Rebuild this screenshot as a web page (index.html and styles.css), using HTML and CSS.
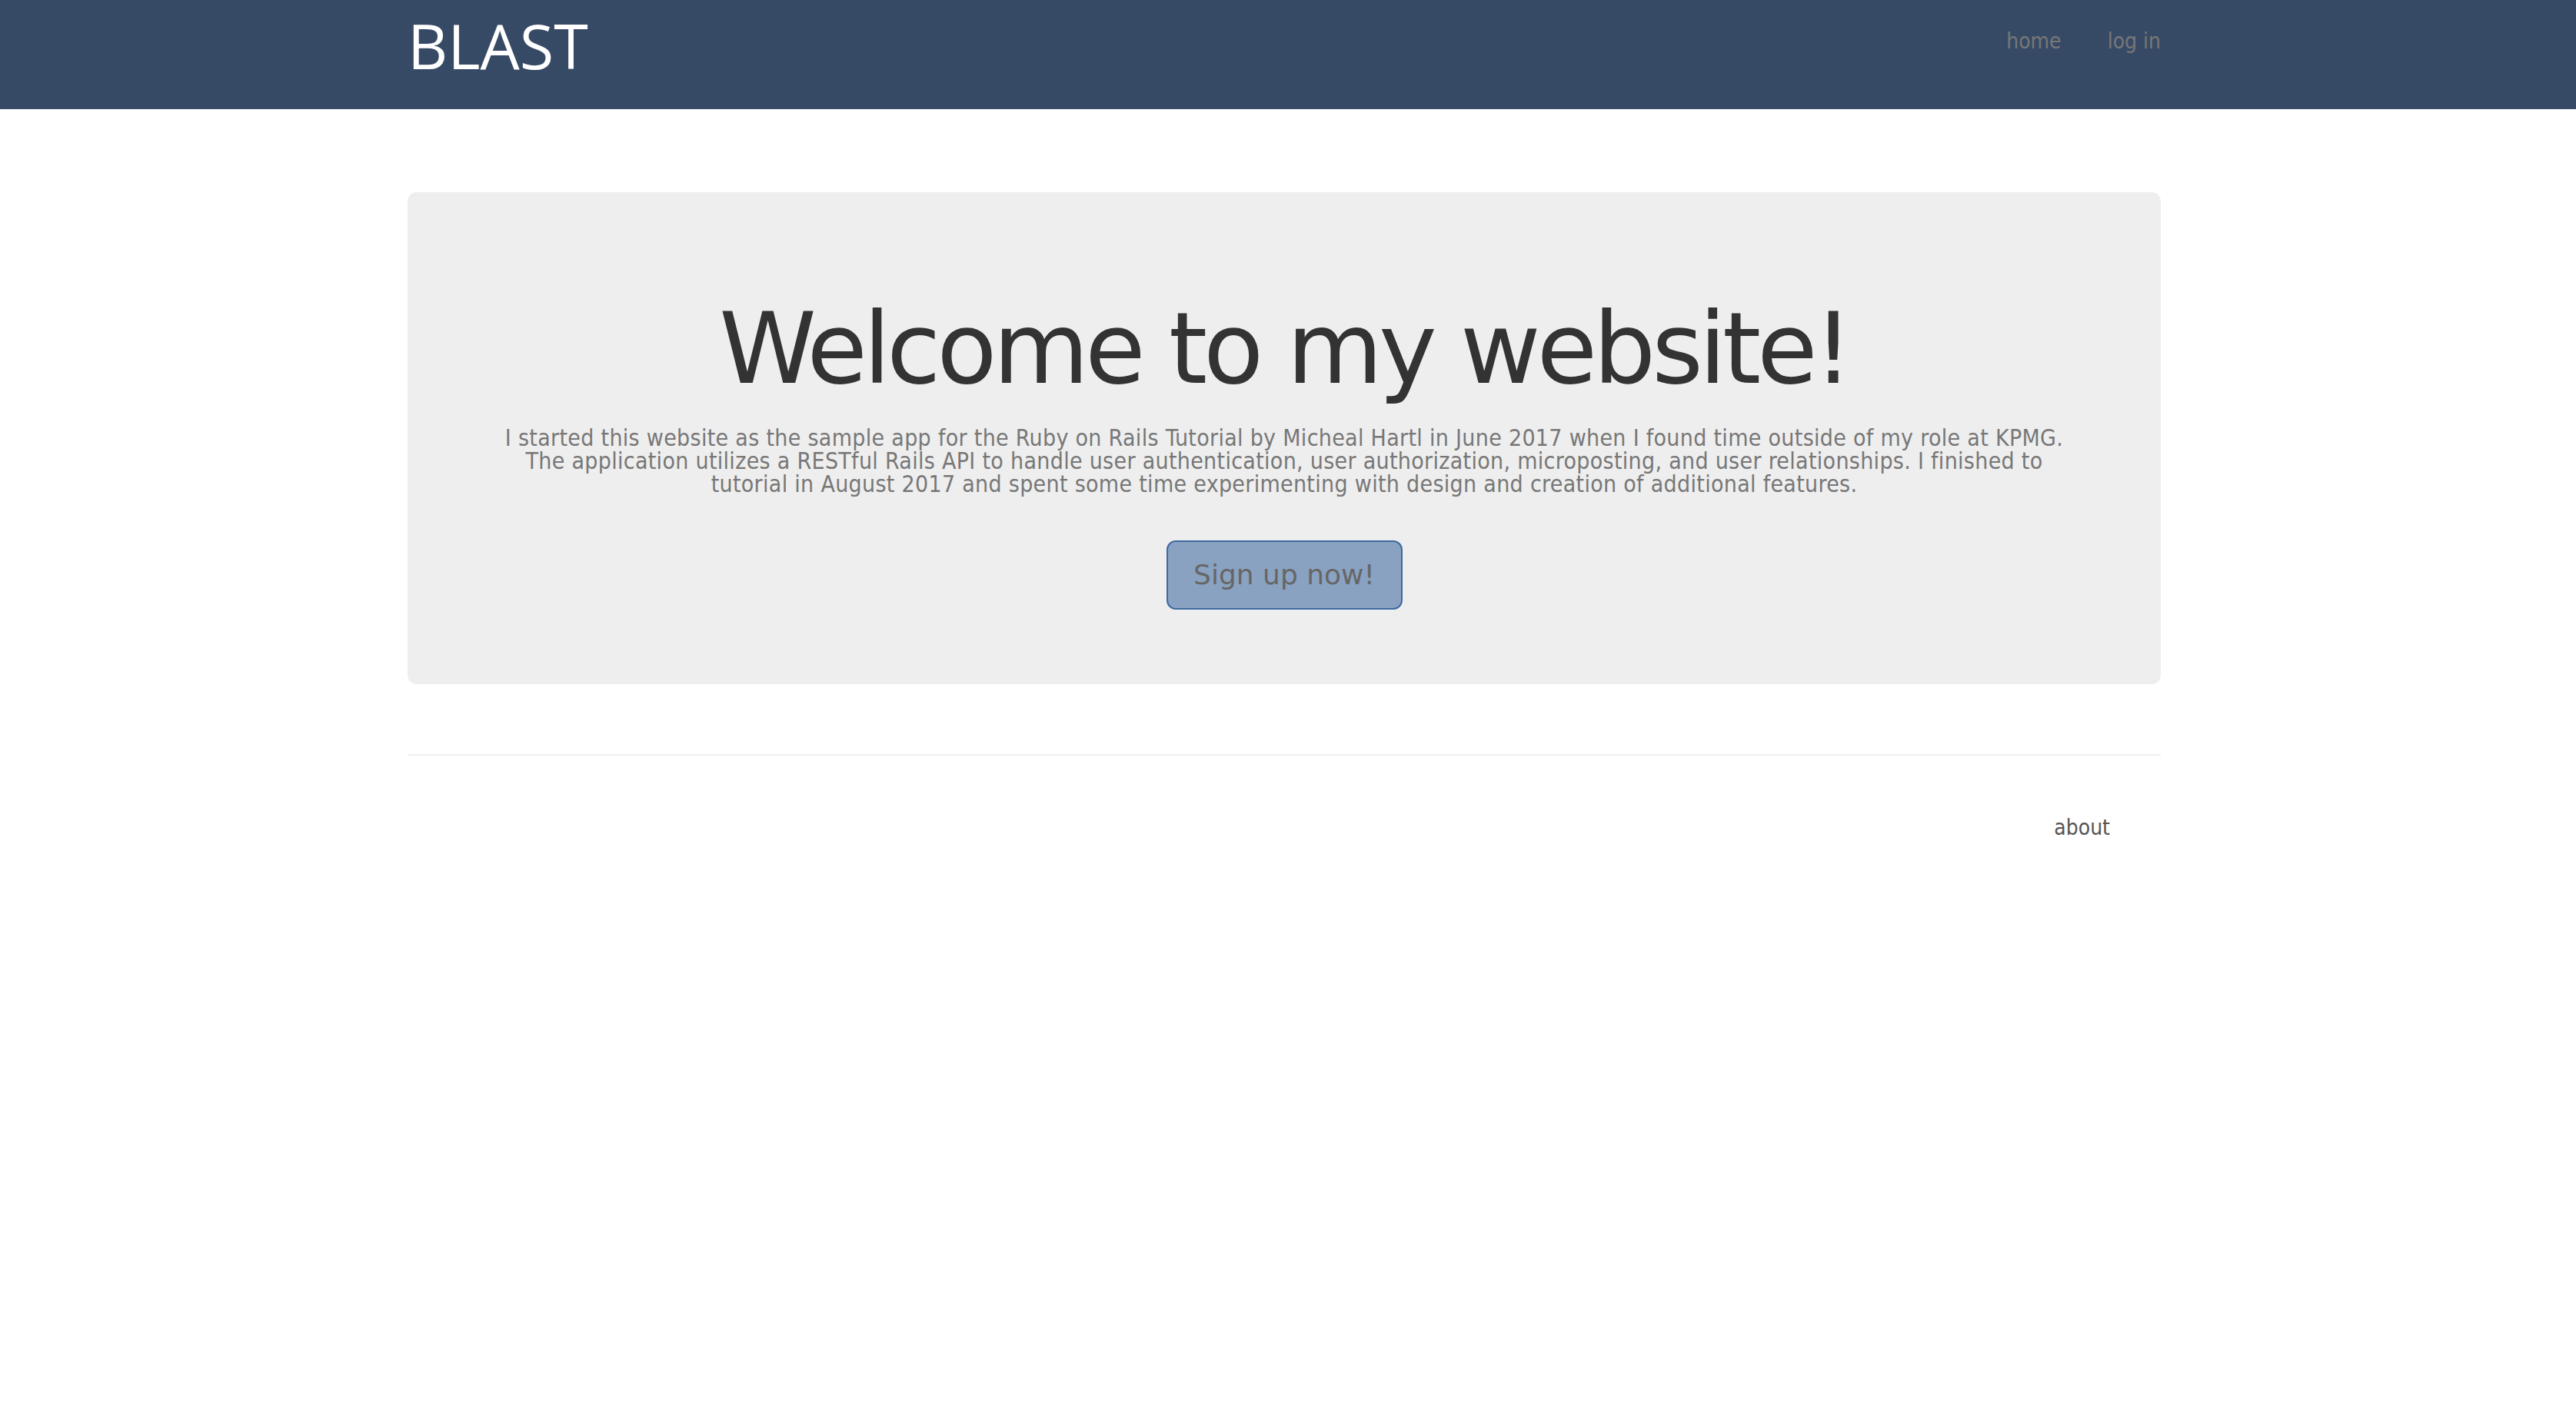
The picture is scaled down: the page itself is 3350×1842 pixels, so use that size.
FILE: index.html
```html
<!DOCTYPE html>
<html lang="en">
<head>
<meta charset="utf-8">
<title>BLAST</title>
<link rel="stylesheet" href="styles.css">
</head>
<body>
<header class="navbar">
  <div class="container navbar-inner">
    <a class="logo" href="#">BLAST</a>
    <nav class="nav-links">
      <a href="#">home</a>
      <a href="#">log in</a>
    </nav>
  </div>
</header>
<main class="container">
  <section class="jumbotron">
    <h1 class="title">Welcome to my website!</h1>
    <p class="intro">I started this website as the sample app for the Ruby on Rails Tutorial by Micheal Hartl in June 2017 when I found time outside of my role at KPMG. The application utilizes a RESTful Rails API to handle user authentication, user authorization, microposting, and user relationships. I finished to tutorial in August 2017 and spent some time experimenting with design and creation of additional features.</p>
    <a class="btn-signup" href="#">Sign up now!</a>
  </section>
  <footer class="footer">
    <nav class="footer-links"><a href="#">about</a></nav>
  </footer>
</main>
</body>
</html>
```
FILE: styles.css
```css
* { box-sizing: border-box; }
html, body { margin: 0; padding: 0; background: #fff; }
body { font-family: "DejaVu Sans", Verdana, sans-serif; font-size: 28px; color: #333; }
a { text-decoration: none; }

.container { width: 2280px; margin-left: 530px; }

.navbar { background: #364a66; height: 142px; }
.navbar-inner { display: flex; justify-content: space-between; align-items: flex-start; height: 100%; }
.logo { font-family: "Open Sans", sans-serif; font-size: 81px; color: #fff; line-height: 1; padding-top: 18px; display: block; }
.nav-links { display: flex; gap: 60px; padding-top: 34px; }
.nav-links a { color: #777; font-family: "DejaVu Sans Condensed", "DejaVu Sans", sans-serif; font-size: 28px; line-height: 40px; }

.jumbotron { margin-top: 108px; background: #eee; border-radius: 12px; padding: 140px 60px 97px; display: flex; flex-direction: column; align-items: center; }
.title { margin: 0; font-weight: normal; font-size: 128px; letter-spacing: -5.2px; line-height: 1; color: #333; }
.intro { margin: 37px 0 0; max-width: 2060px; text-align: center; font-family: "DejaVu Sans Condensed", "DejaVu Sans", sans-serif; font-size: 30px; line-height: 30px; letter-spacing: 0.3px; color: #777; }
.btn-signup { margin-top: 58px; display: block; width: 307px; height: 90px; line-height: 86px; text-align: center; background: #8aa2c2; border: 2px solid #3e6aa0; border-radius: 12px; color: #666; font-size: 36px; }

.footer { margin-top: 91px; border-top: 2px solid #eee; display: flex; justify-content: flex-end; padding-top: 77px; }
.footer-links { padding-right: 66px; }
.footer-links a { color: #555; font-family: "DejaVu Sans Condensed", "DejaVu Sans", sans-serif; font-size: 28px; }
```
